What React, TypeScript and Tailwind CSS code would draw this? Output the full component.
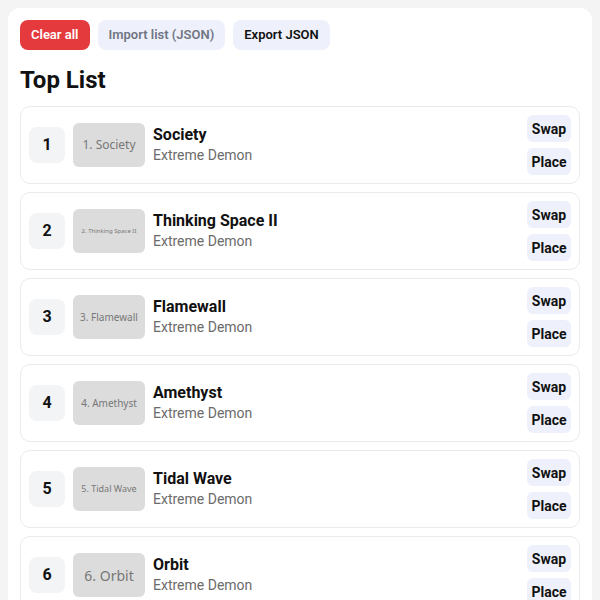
import React from "react";

type Level = { name: string; difficulty: string; thumbSize: string };

const levels: Level[] = [
  { name: "Society", difficulty: "Extreme Demon", thumbSize: "text-[12px]" },
  { name: "Thinking Space II", difficulty: "Extreme Demon", thumbSize: "text-[6px]" },
  { name: "Flamewall", difficulty: "Extreme Demon", thumbSize: "text-[10px]" },
  { name: "Amethyst", difficulty: "Extreme Demon", thumbSize: "text-[10px]" },
  { name: "Tidal Wave", difficulty: "Extreme Demon", thumbSize: "text-[9px]" },
  { name: "Orbit", difficulty: "Extreme Demon", thumbSize: "text-[14px]" },
];

const LevelRow = ({ level, rank }: { level: Level; rank: number }) => {
  return (
    <div className="flex items-center gap-2 rounded-[10px] border border-[#ebebeb] bg-white p-2">
      <div className="flex h-9 w-9 shrink-0 items-center justify-center rounded-lg bg-[#f3f4f6] text-base font-bold text-[#111]">
        {rank}
      </div>
      <div
        className={`flex h-11 w-[72px] shrink-0 items-center justify-center rounded-md bg-[#dcdcdc] text-[#777] ${level.thumbSize}`}
        style={{ fontFamily: '"Noto Sans", sans-serif' }}
      >
        <span className="whitespace-nowrap">
          {rank}. {level.name}
        </span>
      </div>
      <div className="flex min-w-0 flex-1 flex-col">
        <span className="text-base font-bold leading-5 text-[#111]">{level.name}</span>
        <span className="text-sm leading-5 text-[#6b6b6b]">{level.difficulty}</span>
      </div>
      <div className="flex flex-col gap-1.5">
        <button className="h-[27px] w-11 rounded-md bg-[#eef1fb] text-sm font-bold text-[#111]">
          Swap
        </button>
        <button className="h-[27px] w-11 rounded-md bg-[#eef1fb] text-sm font-bold text-[#111]">
          Place
        </button>
      </div>
    </div>
  );
};

export default function App() {
  return (
    <div
      className="min-h-[600px] bg-[#f4f4f4] px-2 pt-2"
      style={{ fontFamily: "Roboto, sans-serif" }}
    >
      <div className="flex flex-col rounded-xl bg-white px-3 pt-3 pb-4">
        <div className="flex gap-2">
          <button className="h-[30px] rounded-lg bg-[#e53a3d] px-[11px] text-[13px] font-semibold text-white">
            Clear all
          </button>
          <button className="h-[30px] rounded-lg bg-[#eef1fb] px-[11px] text-[13px] font-semibold text-[#707584]">
            Import list (JSON)
          </button>
          <button className="h-[30px] rounded-lg bg-[#eef1fb] px-[11px] text-[13px] font-semibold text-[#111]">
            Export JSON
          </button>
        </div>
        <h1 className="mt-[14px] mb-[10px] text-2xl font-bold leading-8 text-[#111]">Top List</h1>
        <div className="flex flex-col gap-2">
          {levels.map((level, i) => (
            <LevelRow key={level.name} level={level} rank={i + 1} />
          ))}
        </div>
      </div>
    </div>
  );
}
